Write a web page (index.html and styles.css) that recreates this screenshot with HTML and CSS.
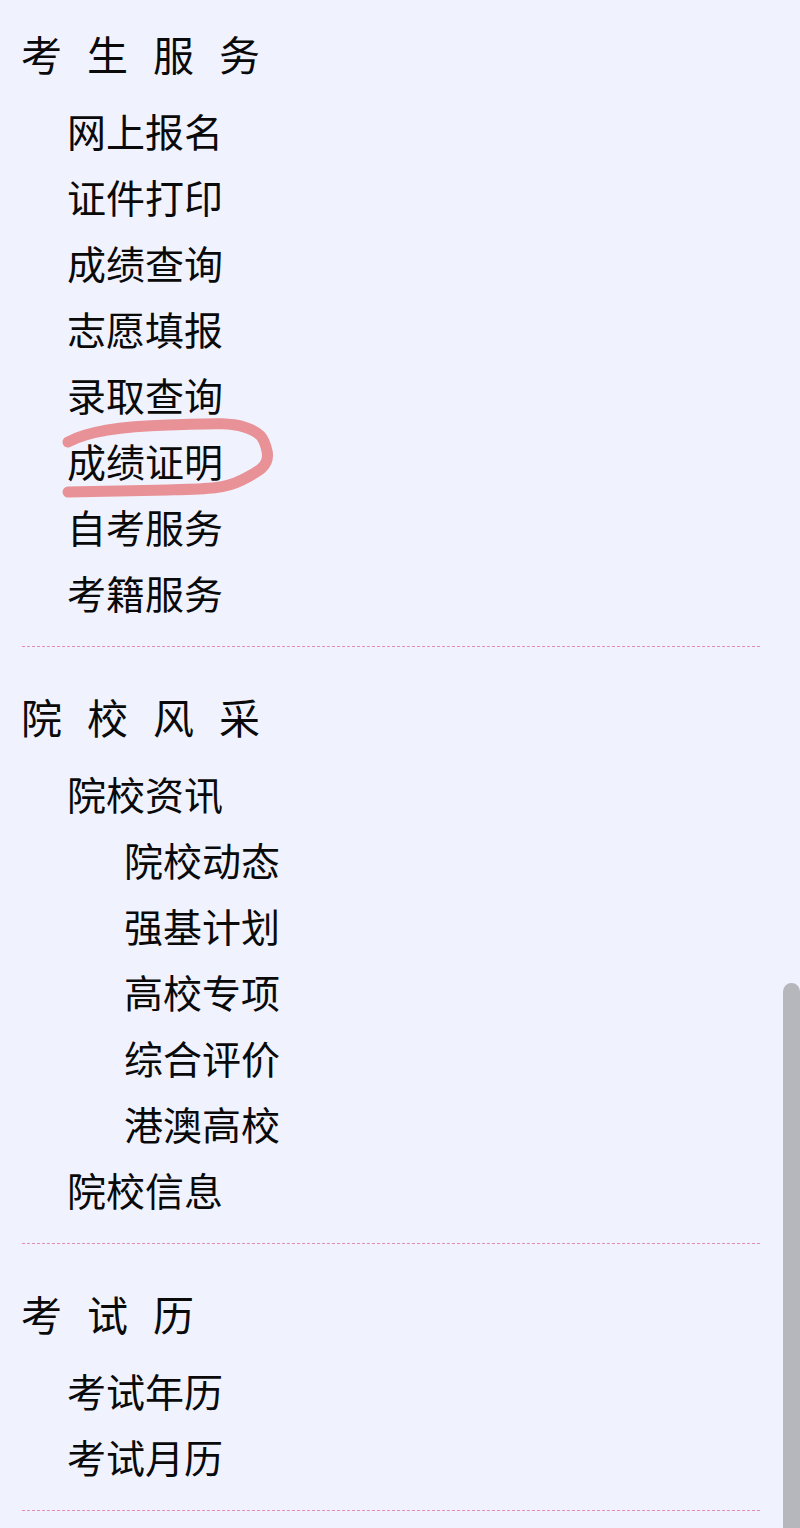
FILE: index.html
```html
<!DOCTYPE html>
<html lang="zh-CN">
<head>
<meta charset="utf-8">
<title>考生服务</title>
<link rel="stylesheet" href="styles.css">
</head>
<body>
<div class="page">
  <section class="group">
    <h2 class="group-title">考生服务</h2>
    <ul class="links">
      <li>网上报名</li>
      <li>证件打印</li>
      <li>成绩查询</li>
      <li>志愿填报</li>
      <li>录取查询</li>
      <li class="marked">成绩证明
        <svg class="mark" viewBox="0 0 240 100" width="240" height="100" aria-hidden="true">
          <path d="M20 33 C40 22, 80 17, 120 16 S 180 13, 196 18 S 216 28, 219 42 S 212 62, 194 71 S 160 80, 120 81 L 20 83" fill="none" stroke="#e8878b" stroke-width="11" stroke-linecap="round" stroke-linejoin="round"/>
        </svg>
      </li>
      <li>自考服务</li>
      <li>考籍服务</li>
    </ul>
  </section>
  <div class="divider"></div>
  <section class="group">
    <h2 class="group-title">院校风采</h2>
    <ul class="links">
      <li>院校资讯
        <ul class="sublinks">
          <li>院校动态</li>
          <li>强基计划</li>
          <li>高校专项</li>
          <li>综合评价</li>
          <li>港澳高校</li>
        </ul>
      </li>
      <li>院校信息</li>
    </ul>
  </section>
  <div class="divider"></div>
  <section class="group">
    <h2 class="group-title">考试历</h2>
    <ul class="links">
      <li>考试年历</li>
      <li>考试月历</li>
    </ul>
  </section>
  <div class="divider"></div>
</div>
<div class="scrollbar"></div>
</body>
</html>
```
FILE: styles.css
```css
html, body {
  margin: 0;
  padding: 0;
  background: #f0f3fe;
}
body {
  font-family: "Noto Sans CJK SC", "Noto Sans", sans-serif;
  color: #0a0a0a;
  overflow: hidden;
}
.page {
  padding-top: 20px;
}
.group-title {
  margin: 0 0 0 21px;
  font-size: 41px;
  font-weight: 400;
  line-height: 66px;
  letter-spacing: 25px;
}
.links {
  list-style: none;
  margin: 11px 0 0 0;
  padding: 0 0 0 67px;
  font-size: 39px;
  line-height: 66px;
}
.links li {
  margin: 0;
}
.sublinks {
  list-style: none;
  margin: 0;
  padding: 0 0 0 57px;
}
.marked {
  position: relative;
}
.mark {
  position: absolute;
  left: -19px;
  top: -18px;
  pointer-events: none;
  opacity: 0.9;
}
.divider {
  height: 1px;
  margin: 21px 38px 36px 22px;
  background: repeating-linear-gradient(to right, #e48fb2 0 3px, transparent 3px 5px);
}
.scrollbar {
  position: fixed;
  right: 0;
  top: 983px;
  bottom: 0;
  width: 17px;
  background: #b6b7bd;
  border-radius: 9px 9px 0 0;
}
```
